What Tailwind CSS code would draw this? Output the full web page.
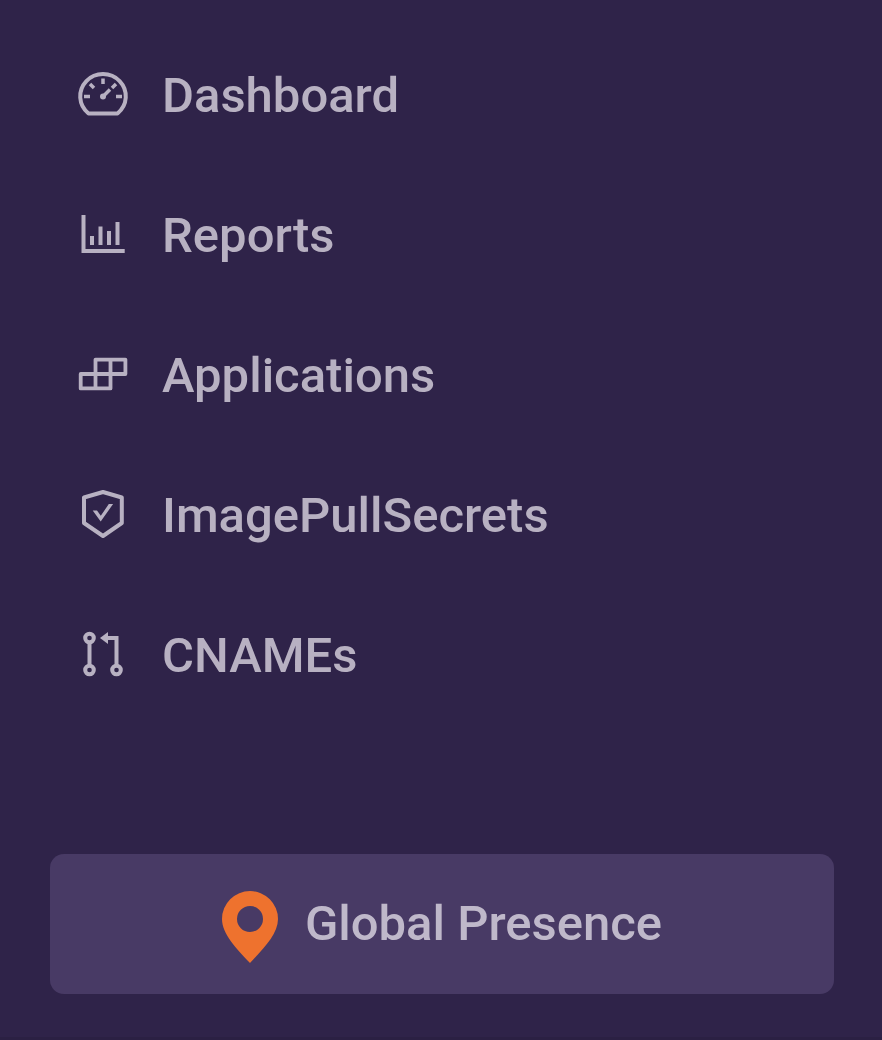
<!DOCTYPE html>
<html lang="en"><head><meta charset="utf-8"><title>Navigation</title>
<script src="https://cdn.jsdelivr.net/npm/@tailwindcss/browser@4"></script></head>
<body class="h-[1040px] overflow-hidden bg-[#2f2349] font-['Roboto',sans-serif] text-[49px] leading-[56px] font-medium text-[#b8b1c2]">
<div class="flex h-[1040px] flex-col border-b-3 border-[#2b2043] pt-[25px]">
<nav class="flex flex-col pl-[75px]">
<a class="flex h-[140px] items-center gap-[31px]"><svg class="size-14" viewBox="75 67 56 56" fill="none" stroke="currentColor" stroke-width="4"><path d="M88.500 113.500A22.800 22.300 0 1 1 117.500 113.500Z" stroke-linejoin="round"/><path d="M103 78.500v5.500M84 96.500h6M116 96.500h6M90 84l4 4M116 84l-4 4M103 96.500l7-7" stroke-width="3.500"/><circle cx="103" cy="96.500" r="3" fill="currentColor" stroke="none"/></svg><span class="pt-0.5">Dashboard</span></a>
<a class="flex h-[140px] items-center gap-[31px]"><svg class="size-14" viewBox="75 207 56 56" fill="none" stroke="currentColor" stroke-width="4"><path d="M83.500 215v36H124.700M92 236v9M100.500 226.500v18.500M109 231v14M117.500 222v23"/></svg><span class="pt-0.5">Reports</span></a>
<a class="flex h-[140px] items-center gap-[31px]"><svg class="size-14" viewBox="75 347 56 56" fill="none" stroke="currentColor" stroke-width="3.800" stroke-linejoin="round"><path d="M80.700 374H125.400V359.600H95.500V388.400H80.700ZM80.700 374v14.400M95.500 388.400H110.500V359.600"/></svg><span class="pt-0.5">Applications</span></a>
<a class="flex h-[140px] items-center gap-[31px]"><svg class="size-14" viewBox="75 487 56 56" fill="none" stroke="currentColor" stroke-width="4" stroke-linejoin="round"><path d="M103 492l18.800 5.500v25.500L103 536 84 523v-25.500Z"/><path d="M92.700 510.500h4.300l3.800 5.300 8-11.800h4.300L100.700 521.500Z" fill="currentColor" stroke="none"/></svg><span class="pt-0.5">ImagePullSecrets</span></a>
<a class="flex h-[140px] items-center gap-[31px]"><svg class="size-14" viewBox="75 627 56 56" fill="none" stroke="currentColor" stroke-width="4"><circle cx="89.500" cy="638" r="4.300"/><circle cx="89.500" cy="670" r="4.300"/><circle cx="116.500" cy="670" r="4.300"/><path d="M89.500 642v24M116.500 666v-28H107"/><path d="M100 638l8-6v12Z" fill="currentColor" stroke="none"/></svg><span class="pt-0.5">CNAMEs</span></a>
</nav>
<a class="mt-[129px] ml-[50px] flex h-[140px] w-[784px] items-center justify-center gap-[27px] rounded-[14px] bg-[#483a65] text-[#bfb8ca]"><svg class="mt-1.5 h-[72px] w-14 text-[#ee722e]" viewBox="0 0 56 72" fill="currentColor"><path fill-rule="evenodd" d="M28 0A28 28 0 0 0 0 28C0 43 14 57 28 72C42 57 56 43 56 28A28 28 0 0 0 28 0ZM28 15a13 13 0 1 1 0 26a13 13 0 0 1 0-26Z"/></svg><span>Global Presence</span></a>
</div></body></html>
